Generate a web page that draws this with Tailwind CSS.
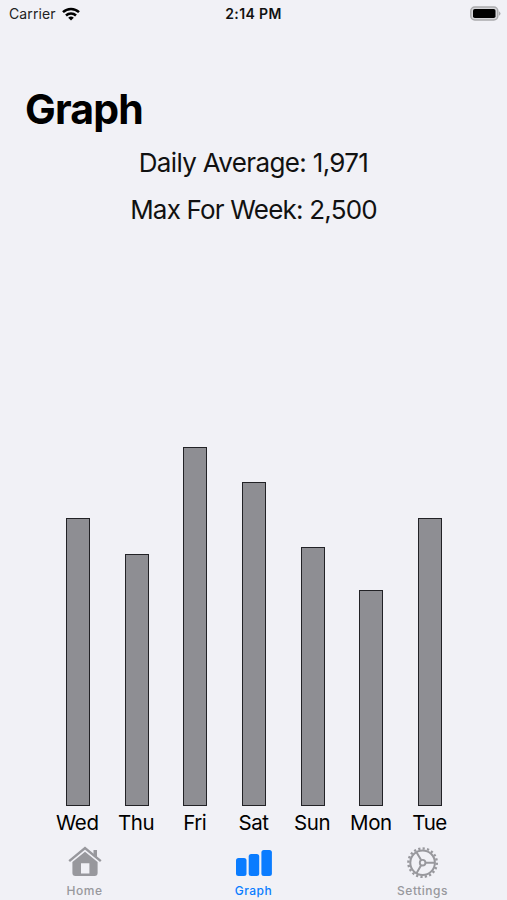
<!DOCTYPE html>
<html lang="en">
<head>
    <title>Graph</title>
    <meta charset="UTF-8" />
    <meta name="viewport" content="width=device-width, initial-scale=1.0"/>
    <script src="https://cdn.jsdelivr.net/npm/@tailwindcss/browser@4"></script>
</head>
<body class="bg-[#f1f1f6] h-screen flex flex-col overflow-hidden font-['Inter','Liberation_Sans',sans-serif] text-black">

    <!-- Status bar -->
    <header class="h-[27px] shrink-0 grid grid-cols-3 items-center pl-[9px] pr-[6px]">
        <div class="flex items-center gap-[6px] text-[#222]">
            <span class="text-[14px] tracking-[0.1px]">Carrier</span>
            <svg class="w-[18px] h-[14px] text-black" viewBox="0 0 18 14" fill="none" stroke="currentColor" stroke-width="2.5">
                <path d="M1 5.2a11.4 11.4 0 0 1 16 0"/>
                <path d="M4 8.5a7.2 7.2 0 0 1 10 0"/>
                <path d="M9 13.6 6.2 10.8a4 4 0 0 1 5.6 0z" fill="currentColor" stroke="none"/>
            </svg>
        </div>
        <span class="text-center text-[14px] font-semibold tracking-[0.4px] -ml-[3px] text-[#111]">2:14 PM</span>
        <svg class="justify-self-end w-[31px] h-[15px]" viewBox="0 0 31 15">
            <rect x=".8" y="1" width="27" height="13" rx="4" fill="#d5d5d9" stroke="#aaaaad" stroke-width="1.5"/>
            <rect x="3" y="3" width="22.5" height="9" rx="1.8" fill="#000"/>
            <path d="M29 5.2q3 2.3 0 4.6z" fill="#aaaaad"/>
        </svg>
    </header>

    <h1 class="mt-[57px] ml-[25px] h-[50px] leading-[50px] text-[41px] font-bold tracking-[-0.8px]">Graph</h1>

    <!-- Totals -->
    <section class="mt-[5px] flex flex-col text-center text-[26px] text-[#111]">
        <p class="h-[47px] leading-[47px] tracking-[-0.65px]">Daily Average: 1,971</p>
        <p class="h-[47px] leading-[47px] tracking-[-0.8px]">Max For Week: 2,500</p>
    </section>

    <!-- Weekly bars -->
    <main id="chart" class="flex-1 grid grid-cols-7 items-end mx-[48px] text-[20.5px] tracking-[-0.4px]"></main>

    <!-- Tabs -->
    <nav class="h-[64px] shrink-0 grid grid-cols-3 text-[12px] font-medium tracking-[0.5px] text-[#98989d]">
        <a class="flex flex-col items-center">
            <svg class="mt-[9px] w-[34px] h-[34px]" viewBox="0 0 34 34" fill="currentColor">
                <path d="M1.2 16.2 17 3 32.8 16.2" fill="none" stroke="currentColor" stroke-width="2.4"/>
                <path d="M25.5 5h3.5v8.5l-3.5-2.8z"/>
                <path fill-rule="evenodd" d="M17 6.8 29.6 17V28a3 3 0 0 1-3 3H7.4a3 3 0 0 1-3-3V17zM13 18.2v10.2h8.4V18.2z"/>
            </svg>
            <span class="mt-1 leading-[16px]">Home</span>
        </a>
        <a class="flex flex-col items-center text-[#0a7cff]">
            <svg class="mt-[9px] w-[38px] h-[34px]" viewBox="0 0 38 34" fill="currentColor">
                <rect x="1" y="13" width="10.5" height="18" rx="2.5"/>
                <rect x="13.7" y="9" width="10.5" height="22" rx="2.5"/>
                <rect x="26.4" y="5" width="10.5" height="26" rx="2.5"/>
            </svg>
            <span class="mt-1 leading-[16px]">Graph</span>
        </a>
        <a class="flex flex-col items-center">
            <svg class="mt-[9px] w-[34px] h-[34px]" viewBox="0 0 34 34" fill="none" stroke="currentColor">
                <circle cx="16.6" cy="17.7" r="12.3" stroke-width="2"/>
                <circle cx="16.6" cy="17.7" r="14.2" stroke-width="2.4" pathLength="40" stroke-dasharray="1 1"/>
                <circle cx="16.6" cy="17.7" r="2.8" stroke-width="1.9"/>
                <path d="M19.6 17.7h9M15.1 15.1l-4.6-7.9M15.1 20.3l-4.6 7.9" stroke-width="2"/>
            </svg>
            <span class="mt-1 leading-[16px]">Settings</span>
        </a>
    </nav>

    <script>
        const steps = [
            { day: 'Wed', count: 2000 },
            { day: 'Thu', count: 1750 },
            { day: 'Fri', count: 2500 },
            { day: 'Sat', count: 2250 },
            { day: 'Sun', count: 1800 },
            { day: 'Mon', count: 1500 },
            { day: 'Tue', count: 2000 }
        ];
        const maxHeight = 359;
        const max = Math.max(...steps.map(s => s.count));

        document.getElementById('chart').innerHTML = steps.map(s => `
            <div class="flex flex-col items-center">
                <div class="w-[24px] ml-px bg-[#8e8e93] border border-[#222226]" style="height: ${s.count / max * maxHeight}px"></div>
                <span class="h-[30.5px] leading-[34px]">${s.day}</span>
            </div>`).join('');
    </script>
</body>
</html>
